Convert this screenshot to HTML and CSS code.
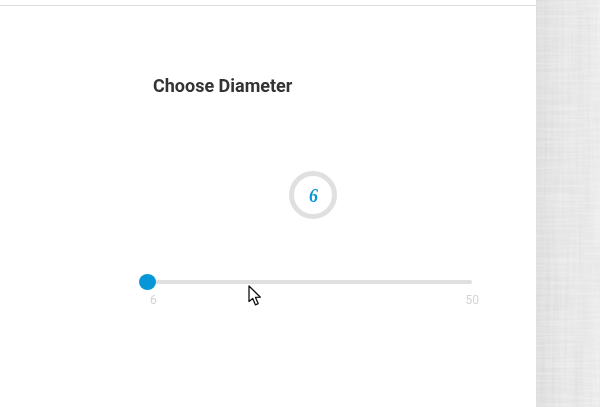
FILE: index.html
```html
<!DOCTYPE HTML>
<html>
<head>
<meta http-equiv="Content-Type" content="text/html; charset=utf-8">
<title>Choose Diameter</title>
<link rel="stylesheet" href="styles.css">
</head>

<body>
	<div class="page">
		<div class="main">
			<h2 class="title">Choose Diameter</h2>
			<div class="bubble"><span class="value">6</span></div>
			<div class="slider">
				<div class="track"><span class="thumb"></span></div>
				<div class="labels">
					<span>6</span>
					<span>50</span>
				</div>
			</div>
			<svg class="cursor" width="14" height="21" viewBox="0 0 14 21">
				<path d="M1 1 L1 16.4 L4.7 13.4 L7.4 19.8 L10.2 18.6 L7.5 12.4 L12.4 12.2 Z" fill="#fff" stroke="#111" stroke-width="1.3" stroke-linejoin="round"/>
			</svg>
		</div>
		<div class="side">
			<svg class="grain" width="64" height="407">
				<filter id="streaks" x="0" y="0" width="100%" height="100%">
					<feTurbulence type="fractalNoise" baseFrequency="0.35 0.012" numOctaves="3" seed="4"/>
					<feColorMatrix values="0 0 0 0 0.5  0 0 0 0 0.5  0 0 0 0 0.5  1.1 0 0 0 -0.42"/>
				</filter>
				<filter id="weave" x="0" y="0" width="100%" height="100%">
					<feTurbulence type="fractalNoise" baseFrequency="0.02 0.4" numOctaves="2" seed="9"/>
					<feColorMatrix values="0 0 0 0 1  0 0 0 0 1  0 0 0 0 1  1.2 0 0 0 -0.45"/>
				</filter>
				<rect width="64" height="407" filter="url(#streaks)" opacity="0.28"/>
				<rect width="64" height="407" filter="url(#weave)" opacity="0.5"/>
			</svg>
		</div>
	</div>
</body>
</html>
```

FILE: styles.css
```css
html, body {margin: 0; padding: 0; height: 100%; background: #fff;}
body {font-family: Roboto, "Liberation Sans", sans-serif; overflow: hidden;}

.page {display: flex; height: 407px;}

.main {width: 536px; position: relative; padding-top: 5px; box-sizing: border-box;}
.main::before {content: ""; display: block; height: 1px; background: #ddd;}

.title {margin: 69px 0 0 153px; font-size: 18px; line-height: 22px; font-weight: 700; color: #333; will-change: transform;}

.bubble {width: 48px; height: 48px; box-sizing: border-box; margin: 74px 0 0 289px; border: 5px solid #e0e0e0; border-radius: 50%; display: flex; align-items: center; justify-content: center; font-family: "Liberation Serif", serif; font-style: italic; font-weight: 700; font-size: 18px; color: #0797d8;}
.value {padding-top: 2px; will-change: transform;}

.slider {width: 325px; margin: 61px 0 0 147px;}
.track {height: 4px; border-radius: 2px; background: #e0e0e0; position: relative;}
.thumb {position: absolute; left: -8px; top: -6px; width: 17px; height: 16px; border-radius: 50%; background: #0797d8;}
.labels {display: flex; justify-content: space-between; margin: 9px -7px 0 3px; font-size: 12px; line-height: 14px; color: #d4d4d4; will-change: transform;}

.cursor {position: absolute; left: 248px; top: 285px;}

.side {flex: 1; background: linear-gradient(90deg, #dedede, #e8e8e8 45%, #e8e8e8 75%, #ededed);}
.grain {display: block;}
```
